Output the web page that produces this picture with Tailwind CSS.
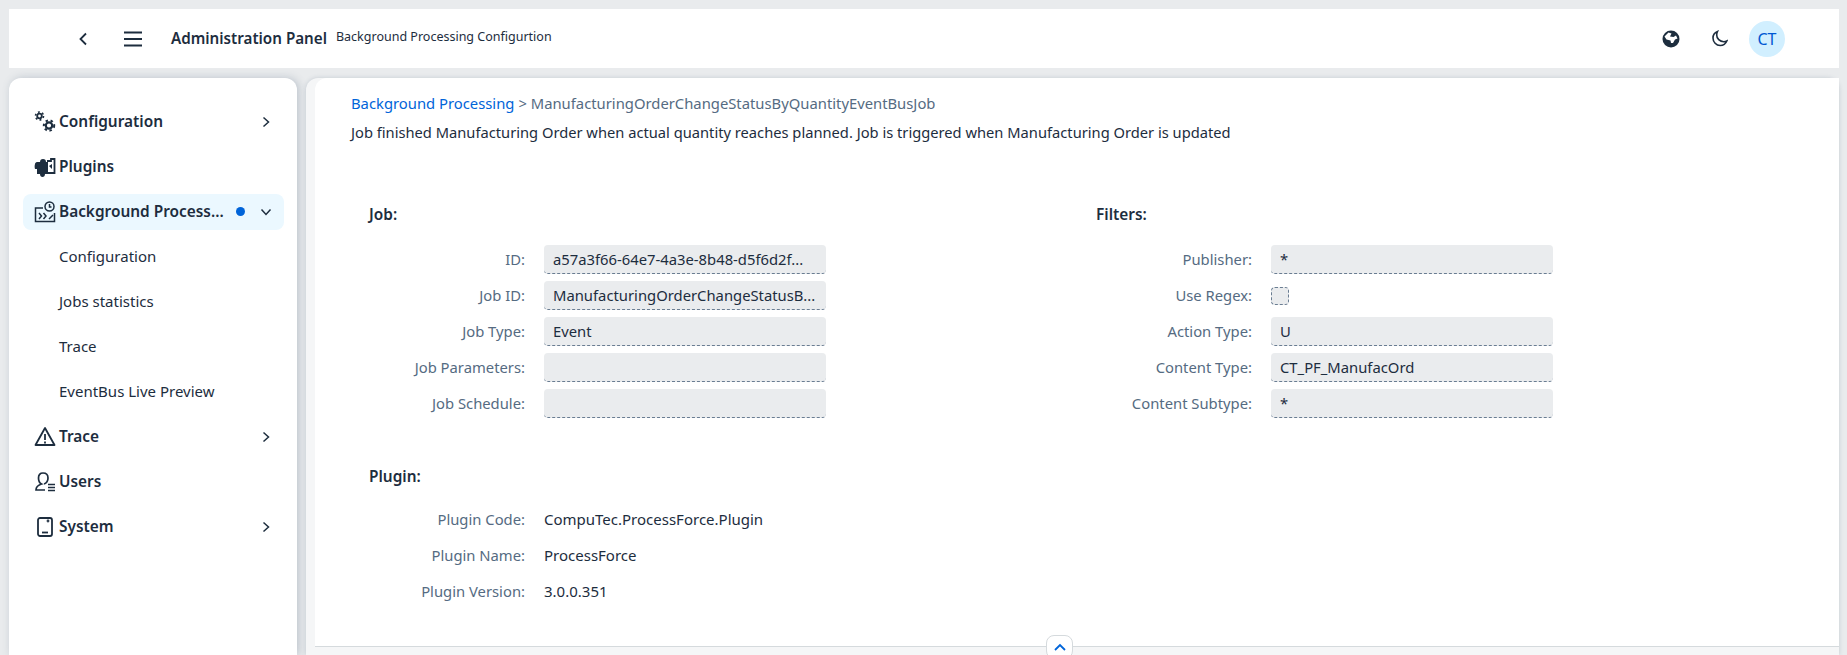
<!DOCTYPE html>
<html lang="en">
<head>
    <meta charset="UTF-8">
    <meta name="viewport" content="width=device-width, initial-scale=1.0">
    <title>Administration Panel</title>
    <script src="https://cdn.jsdelivr.net/npm/@tailwindcss/browser@4"></script>
</head>
<body class="bg-[#e9ebed] h-[655px] overflow-hidden font-['Noto_Sans',sans-serif] text-[14.8px] text-[#1d2d3e]">
    <div class="flex flex-col h-full pt-[9px] pl-[9px] pr-[8px]">
        <!-- Header -->
        <header class="h-[59px] bg-white flex items-center shrink-0">
            <svg class="ml-[68px] w-3 h-4" viewBox="0 0 12 16" fill="none" stroke="#1d2d3e" stroke-width="1.8"><path d="M9 2.5 3.5 8 9 13.5"/></svg>
            <svg class="ml-[34px] w-[20px] h-[18px]" viewBox="0 0 20 18" fill="none" stroke="#1d2d3e" stroke-width="1.8"><path d="M1 2.500h18M1 9h18M1 15.500h18"/></svg>
            <span class="ml-[28px] text-[15.200px] font-semibold">Administration Panel</span>
            <span class="ml-[9px] text-[12.500px] -mt-[2px]">Background Processing Configurtion</span>
            <div class="ml-auto flex items-center">
                <svg class="w-[18px] h-[18px]" viewBox="0 0 18 18"><circle cx="9" cy="9" r="8.500" fill="#1d2d3e"/><path d="M2.500 6.500 6.500 2.500l3 1L8 6.500l3.500.5 2.500-1.500 1.500 3-2.500 1-2 3.500H9L8.500 10.500 4.500 9.500z" fill="#fff"/></svg>
                <svg class="ml-[32px] w-[16px] h-[17px]" viewBox="0 0 16 17" fill="none" stroke="#1d2d3e" stroke-width="1.600"><path d="M5.500 1.500C2.800 2.500 1 5 1 8c0 4 3.200 7.500 7.200 7.500 3 0 5.500-1.800 6.600-4.500-1 .5-2 .7-3 .7C7.800 11.700 4.700 8.500 4.700 5c0-1.300.3-2.500.8-3.500z"/></svg>
                <div class="ml-[21px] mr-[54px] w-[36px] h-[36px] rounded-full bg-[#d1efff] text-[#0057d2] text-[16px] flex items-center justify-center">CT</div>
            </div>
        </header>

        <div class="flex gap-[9px] flex-1 mt-[10px] min-h-0">
            <!-- Sidebar -->
            <aside class="w-[288px] shrink-0 bg-white rounded-t-xl shadow-[2px_0_8px_rgba(85,107,130,0.3)] pt-[21px] pl-[14px] pr-[13px] text-[15px]">
                <div class="h-[45px] flex items-center pl-[11px] pr-[12px] font-semibold text-[15.400px]">
                    <svg class="w-[22px] h-[22px] shrink-0" viewBox="0 0 22 22" fill="none" stroke="#1d2d3e"><circle cx="5.500" cy="5" r="2.300" stroke-width="1.800"/><circle cx="5.500" cy="5" r="4" stroke-width="1.600" stroke-dasharray="1.900 2.300"/><circle cx="15" cy="14.500" r="3.200" stroke-width="2.200"/><circle cx="15" cy="14.500" r="5.200" stroke-width="2" stroke-dasharray="2.400 2.700"/></svg>
                    <span class="ml-[3px]">Configuration</span>
                    <svg class="ml-auto w-3 h-3" viewBox="0 0 12 12" fill="none" stroke="#1d2d3e" stroke-width="1.500"><path d="M3.500 1.500 8.500 6 3.500 10.500"/></svg>
                </div>
                <div class="h-[45px] flex items-center pl-[11px] pr-[12px] font-semibold text-[15.400px]">
                    <svg class="w-[22px] h-[22px] shrink-0" viewBox="0 0 22 22" fill="#1d2d3e"><path d="M1 8c0-1 1-2 2-2h3c0-2 1-3 3-3s3 1 3 3h2v12h-3c0 2-1 3-2.500 3S6 20 6 18H3V13H1c-.5-2-.5-3 0-5z"/><path d="M13 5h4v-2h3.500v14H14" fill="none" stroke="#1d2d3e" stroke-width="1.800"/><path d="M18 13l-3-3 3-2z"/></svg>
                    <span class="ml-[3px]">Plugins</span>
                </div>
                <div class="h-[36px] my-[4.500px] flex items-center pl-[11px] pr-[12px] font-semibold text-[15.400px] bg-[#ebf8ff] rounded-lg">
                    <svg class="w-[22px] h-[22px] shrink-0" viewBox="0 0 22 22" fill="none" stroke="#1d2d3e" stroke-width="1.500"><path d="M9 7H1.500v13.500h19V12"/><circle cx="15.500" cy="5.500" r="4.500"/><path d="M15.500 3v3h2M5 12l2.500 3L5 18M9.500 12l2.500 3-2.500 3M15 18l4-4"/></svg>
                    <span class="ml-[3px] w-[168px] whitespace-nowrap overflow-hidden">Background Process...</span>
                    <span class="ml-auto w-[9px] h-[9px] rounded-full bg-[#0064d9]"></span>
                    <svg class="ml-[15px] w-3 h-3" viewBox="0 0 12 12" fill="none" stroke="#1d2d3e" stroke-width="1.500"><path d="M1.500 3.500 6 8.500 10.500 3.500"/></svg>
                </div>
                <div class="h-[45px] flex items-center pl-[36px]">Configuration</div>
                <div class="h-[45px] flex items-center pl-[36px]">Jobs statistics</div>
                <div class="h-[45px] flex items-center pl-[36px]">Trace</div>
                <div class="h-[45px] flex items-center pl-[36px]">EventBus Live Preview</div>
                <div class="h-[45px] flex items-center pl-[11px] pr-[12px] font-semibold text-[15.400px]">
                    <svg class="w-[22px] h-[22px] shrink-0" viewBox="0 0 22 22" fill="none" stroke="#1d2d3e" stroke-width="1.800" stroke-linejoin="round"><path d="M11 2 1.500 19h19z"/><path d="M11 8v6M11 15.500v2"/></svg>
                    <span class="ml-[3px]">Trace</span>
                    <svg class="ml-auto w-3 h-3" viewBox="0 0 12 12" fill="none" stroke="#1d2d3e" stroke-width="1.500"><path d="M3.500 1.500 8.500 6 3.500 10.500"/></svg>
                </div>
                <div class="h-[45px] flex items-center pl-[11px] pr-[12px] font-semibold text-[15.400px]">
                    <svg class="w-[22px] h-[22px] shrink-0" viewBox="0 0 22 22" fill="none" stroke="#1d2d3e" stroke-width="1.700"><path d="M10 13c3-1 4-3 4-6 0-3-2-5-5-5S4.500 4 4.500 7c0 3 1 5 3 6-3 1-5.500 3-5.500 6h9"/><path d="M14 13.500h7M14 16.500h7M14 19.500h7"/></svg>
                    <span class="ml-[3px]">Users</span>
                </div>
                <div class="h-[45px] flex items-center pl-[11px] pr-[12px] font-semibold text-[15.400px]">
                    <svg class="w-[22px] h-[22px] shrink-0" viewBox="0 0 22 22" fill="none" stroke="#1d2d3e" stroke-width="1.800"><rect x="4" y="2" width="14" height="18" rx="2"/><path d="M8 16.500h6"/><circle cx="14" cy="5" r=".5"/></svg>
                    <span class="ml-[3px]">System</span>
                    <svg class="ml-auto w-3 h-3" viewBox="0 0 12 12" fill="none" stroke="#1d2d3e" stroke-width="1.500"><path d="M3.500 1.500 8.500 6 3.500 10.500"/></svg>
                </div>
            </aside>

            <!-- Main -->
            <main class="relative flex-1 flex flex-col bg-[#f5f6f7] rounded-t-xl shadow-[0_0_4px_rgba(85,107,130,0.25)] pl-[9px] min-w-0">
                <div class="h-[569px] bg-white rounded-tl-xl border-b border-[#d5dadd] pl-[36px] pt-[1px]">
                    <div class="h-[24px] mt-[12px] flex items-center text-[#556b82] whitespace-nowrap"><span class="text-[#0064d9]">Background Processing</span><span class="ml-[4px]">&gt; ManufacturingOrderChangeStatusByQuantityEventBusJob</span></div>
                    <p class="mt-[5px] h-[24px] leading-[24px] text-[14.700px]">Job finished Manufacturing Order when actual quantity reaches planned. Job is triggered when Manufacturing Order is updated</p>

                    <div class="grid grid-cols-[727px_1fr] pl-[18px] mt-[59px]">
                        <section>
                            <h2 class="font-semibold text-[15.400px] h-[24px] leading-[24px]">Job:</h2>
                            <div class="mt-[18px] grid grid-cols-[156px_282px] gap-x-[19px] gap-y-[7px] items-center">
                                <label class="text-right text-[#556b82]">ID:</label>
                                <div class="h-[29px] px-[9px] flex items-center bg-[#eaecee] rounded border-b border-dashed border-[#6a7d92] whitespace-nowrap overflow-hidden">a57a3f66-64e7-4a3e-8b48-d5f6d2f...</div>
                                <label class="text-right text-[#556b82]">Job ID:</label>
                                <div class="h-[29px] px-[9px] flex items-center bg-[#eaecee] rounded border-b border-dashed border-[#6a7d92] whitespace-nowrap overflow-hidden">ManufacturingOrderChangeStatusB...</div>
                                <label class="text-right text-[#556b82]">Job Type:</label>
                                <div class="h-[29px] px-[9px] flex items-center bg-[#eaecee] rounded border-b border-dashed border-[#6a7d92]">Event</div>
                                <label class="text-right text-[#556b82]">Job Parameters:</label>
                                <div class="h-[29px] px-[9px] flex items-center bg-[#eaecee] rounded border-b border-dashed border-[#6a7d92]"></div>
                                <label class="text-right text-[#556b82]">Job Schedule:</label>
                                <div class="h-[29px] px-[9px] flex items-center bg-[#eaecee] rounded border-b border-dashed border-[#6a7d92]"></div>
                            </div>
                        </section>
                        <section>
                            <h2 class="font-semibold text-[15.400px] h-[24px] leading-[24px]">Filters:</h2>
                            <div class="mt-[18px] grid grid-cols-[156px_282px] gap-x-[19px] gap-y-[7px] items-center">
                                <label class="text-right text-[#556b82]">Publisher:</label>
                                <div class="h-[29px] px-[9px] flex items-center bg-[#eaecee] rounded border-b border-dashed border-[#6a7d92]">*</div>
                                <label class="text-right text-[#556b82]">Use Regex:</label>
                                <div class="h-[29px] flex items-center"><span class="w-[18px] h-[18px] bg-[#eaecee] rounded border border-dashed border-[#6a7d92]"></span></div>
                                <label class="text-right text-[#556b82]">Action Type:</label>
                                <div class="h-[29px] px-[9px] flex items-center bg-[#eaecee] rounded border-b border-dashed border-[#6a7d92]">U</div>
                                <label class="text-right text-[#556b82]">Content Type:</label>
                                <div class="h-[29px] px-[9px] flex items-center bg-[#eaecee] rounded border-b border-dashed border-[#6a7d92]">CT_PF_ManufacOrd</div>
                                <label class="text-right text-[#556b82]">Content Subtype:</label>
                                <div class="h-[29px] px-[9px] flex items-center bg-[#eaecee] rounded border-b border-dashed border-[#6a7d92]">*</div>
                            </div>
                        </section>
                    </div>

                    <section class="pl-[18px] mt-[47px]">
                        <h2 class="font-semibold text-[15.400px] h-[24px] leading-[24px]">Plugin:</h2>
                        <div class="mt-[16px] grid grid-cols-[156px_282px] gap-x-[19px] gap-y-[7px] items-center">
                            <label class="text-right text-[#556b82]">Plugin Code:</label>
                            <div class="h-[29px] flex items-center text-[15px]">CompuTec.ProcessForce.Plugin</div>
                            <label class="text-right text-[#556b82]">Plugin Name:</label>
                            <div class="h-[29px] flex items-center text-[15px]">ProcessForce</div>
                            <label class="text-right text-[#556b82]">Plugin Version:</label>
                            <div class="h-[29px] flex items-center text-[15px]">3.0.0.351</div>
                        </div>
                    </section>
                </div>
                <button class="absolute left-[740px] top-[557px] w-[27px] h-[24px] bg-white rounded-lg border border-[#d5dadd] flex items-center justify-center">
                    <svg class="w-3 h-2" viewBox="0 0 12 8" fill="none" stroke="#0064d9" stroke-width="1.800"><path d="M1 7l5-5 5 5"/></svg>
                </button>
            </main>
        </div>
    </div>
</body>
</html>
